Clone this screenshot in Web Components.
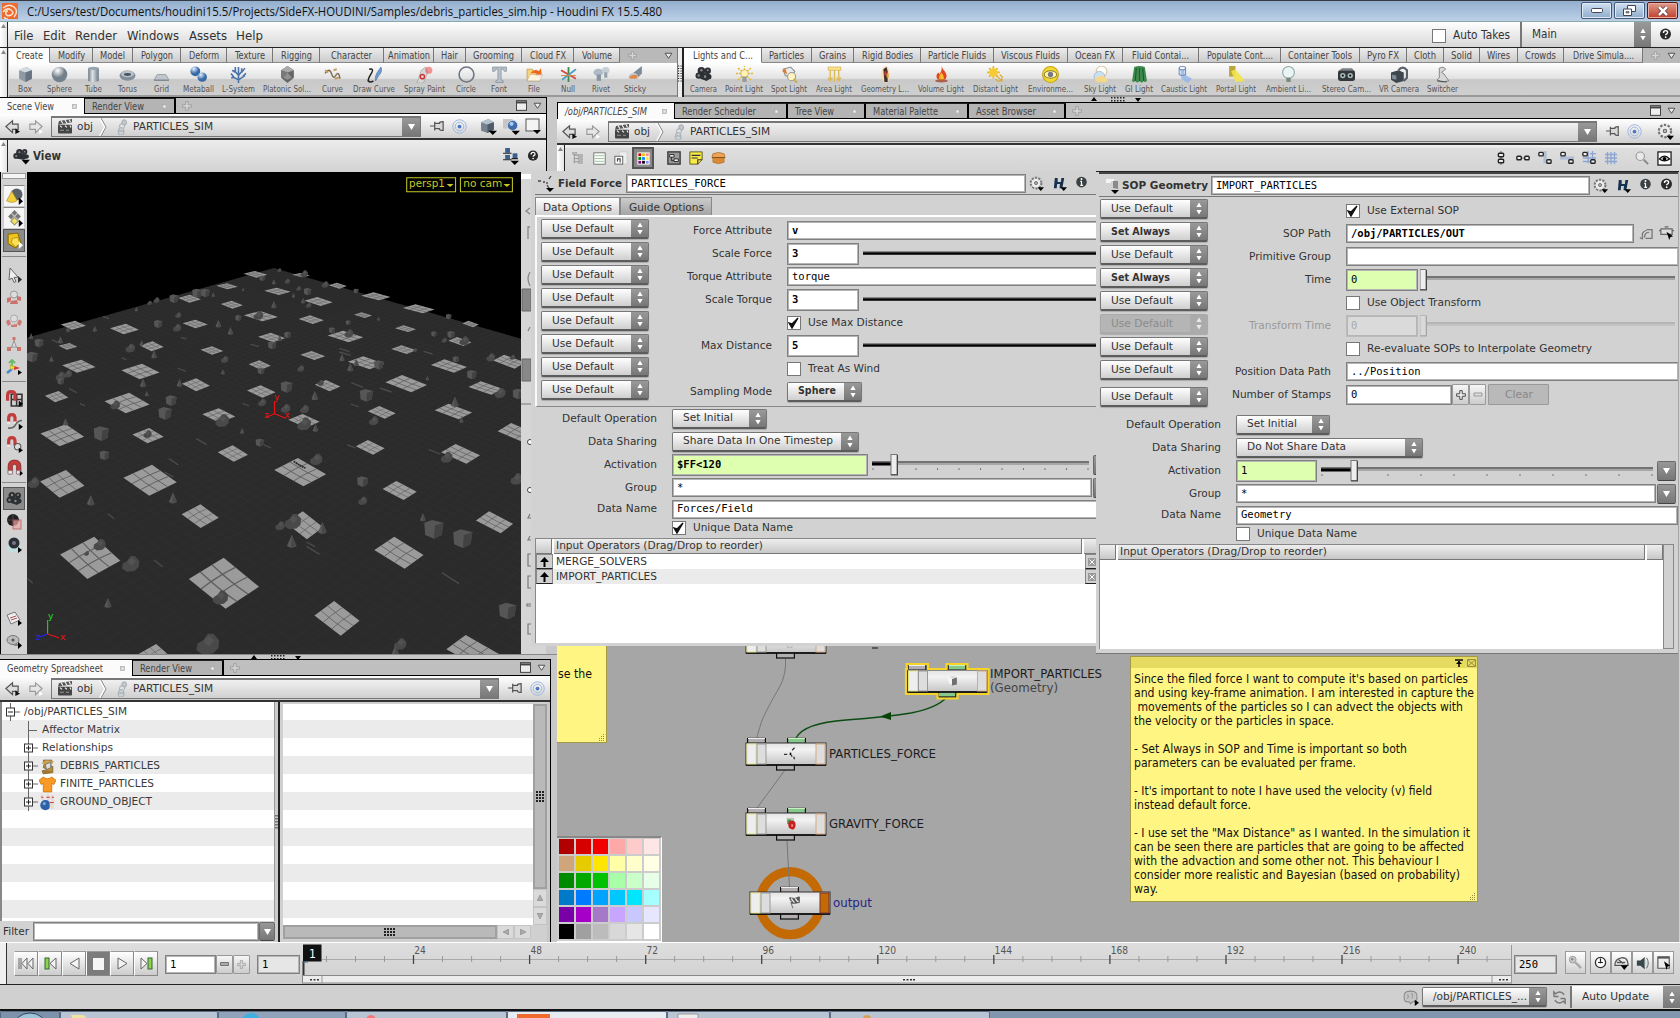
<!DOCTYPE html>
<html lang="en"><head><meta charset="utf-8"><title>Houdini FX</title>
<style>html,body{margin:0;padding:0;overflow:hidden;background:#000}</style></head>
<body><houdini-app></houdini-app>
<script>
const A=(e,n,d='')=>e.hasAttribute(n)?e.getAttribute(n):d;
const def=(name,css,html)=>customElements.define(name,class extends HTMLElement{
  connectedCallback(){ if(this.shadowRoot)return;
    this.attachShadow({mode:'open'}).innerHTML=`<style>*{box-sizing:border-box}${css}</style>`+html(this); }});

/* ---------- fitted text ---------- */
const ctx=document.createElement('canvas').getContext('2d');
const FAM={s:'"DejaVu Sans",sans-serif',c:'"DejaVu Sans Condensed","DejaVu Sans",sans-serif',m:'"DejaVu Sans Mono",monospace',o:'"Open Sans",sans-serif'};
customElements.define('t-x',class extends HTMLElement{
  connectedCallback(){ if(this.shadowRoot)return;
    const s=+A(this,'s','11'),f=FAM[A(this,'f','s')],b=this.hasAttribute('b')?'bold':'normal',i=this.hasAttribute('i')?'italic ':'';
    ctx.font=`${i}${b} ${s}px ${f}`;
    const n=ctx.measureText(this.textContent).width||1, w=this.hasAttribute('w')?+A(this,'w'):n*(A(this,'f')=='m'?.955:.965), k=w/n;
    this.attachShadow({mode:'open'}).innerHTML=`<style>:host{display:inline-block;flex:none;width:${w.toFixed(2)}px;height:${s+3}px;line-height:${s+3}px;font:${i}${b} ${s}px/${s+3}px ${f};white-space:pre}
    span{display:inline-block;transform:scaleX(${k.toFixed(4)});transform-origin:0 0;white-space:pre}</style><span><slot></slot></span>`; }});
const T=(t,w,x='')=>`<t-x ${w?`w="${w}"`:''} ${x}>${t}</t-x>`;

/* ---------- icons, 16x16 grid ---------- */
const IC={
box:'<path d="M2 4l7-3 5 3v8l-6 3-6-3z" fill="#8d99a5"/><path d="M2 4l7-3 5 3-6 2z" fill="#d3dae1"/><path d="M8 6l6-2v8l-6 3z" fill="#67737f"/>',
sphere:'<radialGradient id="a" cx=".38" cy=".25"><stop offset="0" stop-color="#fff"/><stop offset=".9" stop-color="#74808c"/></radialGradient><circle cx="8" cy="8" r="7.3" fill="url(#a)"/>',
tube:'<linearGradient id="a"><stop offset="0" stop-color="#6c7883"/><stop offset=".4" stop-color="#dde3e8"/><stop offset="1" stop-color="#6c7883"/></linearGradient><path d="M3 2h10v12q-5 2-10 0z" fill="url(#a)"/><ellipse cx="8" cy="2.2" rx="5" ry="1.5" fill="#98a5b0"/>',
torus:'<ellipse cx="8" cy="9" rx="7.5" ry="4.8" fill="#828e9a"/><ellipse cx="8" cy="7.5" rx="6" ry="3" fill="#bac3cb"/><ellipse cx="8" cy="8" rx="3.4" ry="1.3" fill="#4b5662"/>',
grid:'<path d="M4 8h8l3 5H1z" fill="#bfc5ca" stroke="#8c949c" stroke-width=".7"/><path d="M1 13h14v1H1z" fill="#7b848c"/>',
meta:'<radialGradient id="a" cx=".35" cy=".25"><stop offset="0" stop-color="#e4f1ff"/><stop offset="1" stop-color="#3669a6"/></radialGradient><circle cx="5" cy="5" r="4.6" fill="url(#a)"/><circle cx="11.5" cy="10.5" r="4.4" fill="url(#a)"/>',
lsys:'<path d="M8 16V7M8 13L2 10M8 13l6-4M8 9L4 4M8 9l4-5M8 7V1M4 11L1 7M12 10l3-3M5 6L2 4M11 6l3-4M5 5V1M11 5V2M1 11h3" fill="none" stroke="#4a74a9" stroke-width="1.5"/>',
plat:'<path d="M8 0l6 4v7l-6 5-6-5V4z" fill="#666"/><path d="M8 0l6 4-6 2-6-2z" fill="#aaa"/><path d="M8 6l-4 5 4 2 4-2z" fill="#919191"/><path d="M2 4l6 2-4 5-2 0z" fill="#797979"/>',
curve:'<path d="M1 7q4-6 6 0t4 2q3-5 4 3" fill="none" stroke="#7a6a52" stroke-width="1.3"/><path d="M1 4l3 2M9 4l3-1M10 12l4-1" stroke="#c79a5a" stroke-width="1.8"/>',
draw:'<path d="M3 3q5-1 2 4t-3 7q2 2 5 0" fill="none" stroke="#222" stroke-width="1.4"/><path d="M14 1q2 4-2 8l-3 5q-1-3 1-7z" fill="#6f9dce" stroke="#426d9d" stroke-width=".6"/>',
spray:'<path d="M5 4l4-3 2 5-4 10H1l3-9z" fill="#d8d8d8" stroke="#999" stroke-width=".6"/><circle cx="6" cy="10" r="2" fill="none" stroke="#c33" stroke-width="1.3"/><circle cx="12" cy="4" r="3.4" fill="#e55" opacity=".6"/>',
circle:'<circle cx="8" cy="8" r="7" fill="none" stroke="#6d7681" stroke-width="1.5"/>',
font:'<path d="M1.500 1h13v4h-2l-1-2h-2v10l2 1v1.500H4.500V14l2-1V3h-2l-1 2h-2z" fill="#b8c2cc" stroke="#77828e" stroke-width=".6"/>',
file:'<path d="M1 3h5l1 2h6v9H1z" fill="#f7d37c" stroke="#b98b2d" stroke-width=".6"/><path d="M4 7q4-5 8-2l2-3 1 8-7-1 2-2q-3-1-6 0z" fill="#ee6a1b"/><path d="M1 14l3-6h12l-3 6z" fill="#fff" opacity=".75" stroke="#aaa" stroke-width=".5"/>',
nul:'<path d="M8 1v14" stroke="#3a8a4a" stroke-width="1.7"/><path d="M1 4l14 8" stroke="#d4453e" stroke-width="1.7"/><path d="M15 3L2 13" stroke="#4aa1c4" stroke-width="1.7"/><path d="M1 9h14" stroke="#d08a4a" stroke-width="1"/>',
rivet:'<ellipse cx="5" cy="6" rx="4.500" ry="3.500" fill="#aebac5"/><path d="M3.500 8h4v6h-4z" fill="#8795a3"/><ellipse cx="12" cy="4" rx="3.500" ry="3" fill="#c6cfd7"/><path d="M10.500 6h3v5h-3z" fill="#93a0ac"/>',
sticky:'<path d="M14 0v7l-5 5-5-4z" fill="#7d8a97"/><circle cx="6" cy="11" r="4.500" fill="#c5cdd5"/><path d="M2 10q4-3 8-1l-1 3H3z" fill="#e08a4a"/>',
cam:'<g fill="#2c2f33"><circle cx="6" cy="4.500" r="3.500"/><circle cx="12" cy="4.500" r="3"/><path d="M5 6l8 1 2 4-4 3-6-2z"/><circle cx="3.500" cy="9" r="3"/><circle cx="13" cy="10" r="2.500"/></g><g fill="#888"><circle cx="6" cy="4" r="1.200"/><circle cx="12" cy="4" r="1"/><circle cx="3.500" cy="9" r="1.200"/><circle cx="9.500" cy="10" r="1.200"/></g>',
point:'<g stroke="#e3b92e" stroke-width="1.400" stroke-dasharray="2 1"><path d="M8 7V0M8 7L2 2M8 7l6-5M8 7H0M8 7h8M8 8l-6 5M8 8l6 5"/></g><circle cx="8" cy="7" r="3.500" fill="#fff3b5" stroke="#c9a43c" stroke-width=".6"/><rect x="6" y="10" width="4" height="5" fill="#999"/>',
spot:'<path d="M2 3l7-2 4 4-3 6-6-2z" fill="#e9eaec" stroke="#8a8f94"/><path d="M1 5l3-3 2 6z" fill="#dd7b33"/><circle cx="10" cy="10" r="3.800" fill="#fff4be" stroke="#999"/><path d="M12 12l3 4" stroke="#c8b05a" stroke-width="2"/>',
area:'<path d="M2 1h12v3H2z" fill="#fbe48c" stroke="#cda942" stroke-width=".6"/><path d="M4 4v9M8 4v11M12 4v9M2 11l2 3 2-3M10 11l2 3 2-3" fill="none" stroke="#ddbb52" stroke-width="1.300"/>',
geo:'<ellipse cx="8" cy="8" rx="4" ry="8" fill="#fbd9a4" opacity=".8"/><path d="M6 3l3-2 1 4v10H7z" fill="#3b3030"/><path d="M7 5h2v4H7z" fill="#d33"/><path d="M9 7h2v4H9z" fill="#e9a030"/>',
fire:'<path d="M8 0q1 3 3 5 3 4 1 7-4 3-8 0-2-3 1-6 1 1 1 2 3-4 2-8z" fill="#e2471e"/><path d="M8 6q3 4 2 7-2 2-4 0-1-3 2-7z" fill="#f9bb2f"/><ellipse cx="8" cy="14" rx="6" ry="1.500" fill="#9c3520" opacity=".7"/>',
dist:'<g stroke="#e7b821" stroke-width="1.500"><path d="M6 0v12M0 6h12M2 2l8 8M10 2l-8 8"/></g><circle cx="6" cy="6" r="4" fill="#f8cb35"/><path d="M9 9l5 5M12 8l3 3M8 12l3 3M14 11v3h-3" stroke="#d6ab2a" fill="none"/>',
env:'<circle cx="8" cy="8" r="7.500" fill="#f3d832" stroke="#c6a51b"/><ellipse cx="8" cy="8" rx="6" ry="3.500" fill="#fff6a9" stroke="#8f8132"/><circle cx="8" cy="8" r="2.500" fill="#778"/>',
sky:'<circle cx="9" cy="5" r="5" fill="#fff" stroke="#c0a469" stroke-width=".7"/><circle cx="7" cy="10" r="5" fill="#c9e0f3" stroke="#98a9b9" stroke-width=".6"/><path d="M3 12q5-5 10-1l2 3q-7 3-12 0z" fill="#f4d98a"/>',
gi:'<path d="M3 1q5-2 10 0l2 13q-2 2-3 0-2 3-4 0-2 3-4 0-2 2-3 0z" fill="#3f8a4e"/><path d="M5 2L4 14M8 2v12M11 2l1 12" stroke="#1d5a2e"/>',
caus:'<path d="M4 1h4v7l7 4-4 4-6-4z" fill="#8fb4ea" opacity=".8"/><ellipse cx="6" cy="2" rx="3" ry="1.500" fill="#fff" stroke="#6f8fc0"/><path d="M3 2v6q3 2 6 0V2" fill="none" stroke="#6f8fc0"/>',
portal:'<path d="M1 0h6v10H1z" fill="#baa63b"/><path d="M3 5l4-2 9 11-9 1z" fill="#f1e44b" opacity=".9"/>',
bulb:'<circle cx="8" cy="6" r="5.500" fill="#e8f5f4" stroke="#8fa7a7"/><path d="M6 11h4v4H6z" fill="#787"/>',
stereo:'<rect x="0" y="4" width="16" height="10" rx="2" fill="#33373b"/><path d="M1 4l3-2h9l2 2z" fill="#7d8388"/><circle cx="4.500" cy="9" r="2.500" fill="#abb"/><circle cx="11.500" cy="9" r="2.500" fill="#abb"/><circle cx="4.500" cy="9" r="1"/><circle cx="11.500" cy="9" r="1"/>',
vr:'<path d="M0 6l7-2 5 2v8l-7 2-5-3z" fill="#3e454d"/><path d="M7 4q4-5 8 0v7l-3 3" fill="none" stroke="#59626c" stroke-width="2"/><path d="M1 8l4 1v4l-4-1z" fill="#7e8b98"/>',
sw:'<path d="M5 2q4-2 6 1l-4 3q3 1 4 4l3 4-7 1-4-2q3-2 2-5z" fill="#d5d7d9" stroke="#777" stroke-width=".8"/><path d="M3 14l9 1" stroke="#555"/>',
back:'<path d="M1 8l7-6v3.500h6V11H8v3.500z" fill="#ddd" stroke="#555" stroke-width="1.300"/><path d="M11 10l5 3.500-5 2.500z" fill="#111"/>',
fwd:'<path d="M15 8L8 2v3.500H2V11h6v3.500z" fill="#e6e6e6" stroke="#999" stroke-width="1.200"/><path d="M12 11l4 2.500-4 2.500z" fill="#fff"/>',
clap:'<rect x="1" y="6" width="14" height="9.500" rx="1" fill="#444"/><path d="M1 6l1-4 13-2v3.500z" fill="#555"/><path d="M4 1.500L6 5M8 1l2 3.500M12 .500l1.500 3M3 7l2 2M8 7l2 2M13 7l1 2" stroke="#eee" stroke-width="1.200"/><path d="M3 12h4M9 12h3" stroke="#999"/>',
sim:'<circle cx="10.500" cy="3.500" r="2.800" fill="#c3c8cd" stroke="#9098a0" stroke-width=".7"/><path d="M6 5l4 0 1 3-3 2-3-2z" fill="#dfe3e6" stroke="#9098a0" stroke-width=".7"/><path d="M5 9q4-1 5 1 1 5-1 6H5q-3-3 0-7z" fill="#cdd2d7" stroke="#9098a0" stroke-width=".7"/><path d="M4 12h6" stroke="#9aa"/>',
pin:'<path d="M0 8h5M5 3v10M5 5h5q0-2 4-2v10q-4 0-4-2H5z" fill="#d8d8d8" stroke="#555" stroke-width="1.300"/>',
target:'<g fill="none" stroke="#9bb4dd"><circle cx="8" cy="8" r="7.200"/><circle cx="8" cy="8" r="4.600"/></g><circle cx="8" cy="8" r="2" fill="#4a79be"/>',
cubed:'<path d="M1 4l7-3 5 3v7l-6 3-6-2z" fill="#778290"/><path d="M1 4l7-3 5 3-6 2z" fill="#b5c2cf"/><path d="M7 6l6-2v7l-6 3z" fill="#4f5b69"/><path d="M8 12h8l-4 4z"/>',
sphd:'<rect x="0" y="1" width="9" height="9" fill="#c6c6c6"/><circle cx="9" cy="7" r="4.800" fill="#3c6cab" stroke="#ddd" stroke-width=".8"/><circle cx="8" cy="5.500" r="2" fill="#a9c9ee"/><path d="M8 12h8l-4 4z"/>',
sqd:'<rect x="1" y="1" width="13" height="12" fill="#f4f4f4" stroke="#555"/><path d="M8 12h8l-4 4z"/>',
camd:'<g fill="#2c2f33"><circle cx="6" cy="4" r="3"/><circle cx="11" cy="3.500" r="2.500"/><path d="M5 5l8 1 1 3-4 2-6-1z"/><circle cx="3" cy="7.500" r="2.700"/><circle cx="13" cy="8" r="2"/></g><g fill="#888"><circle cx="6" cy="4" r="1"/><circle cx="3" cy="7.500" r="1"/><circle cx="11" cy="3.500" r=".8"/></g><path d="M8 11h8l-4 4.500z"/>',
net:'<g fill="#3d5f8d"><rect x="3" y="0" width="4.500" height="4.500"/><rect x="3" y="6.500" width="4.500" height="4"/><rect x="10" y="5" width="4.500" height="4.500"/></g><path d="M1 5h8M1 11h8M9 10h6" stroke="#222"/><path d="M8 12h8l-4 4z"/>',
help:'<circle cx="8" cy="7.500" r="6.800" fill="#2a2a2a"/><path d="M5.500 6q0-2.700 2.600-2.700t2.500 2.200q0 1.200-1.500 1.900Q8.200 7.900 8.200 9" fill="none" stroke="#fff" stroke-width="1.700"/><circle cx="8.200" cy="11.300" r="1.100" fill="#fff"/>',
info:'<circle cx="8" cy="7.500" r="6.500" fill="#3b4044"/><path d="M8 6.500v5M6.500 6.500h2M6.500 11.500h3.500" stroke="#fff" stroke-width="1.500"/><circle cx="8" cy="3.800" r="1.200" fill="#fff"/>',
geard:'<circle cx="7.500" cy="7.500" r="5.500" fill="#e4e4e4" stroke="#777" stroke-width="2.600" stroke-dasharray="2.200 1.255"/><circle cx="7.500" cy="7.500" r="4.700" fill="#ececec"/><circle cx="7.500" cy="7.500" r="1.600" fill="#bbb" stroke="#666"/><path d="M9 12h7l-3.500 4z"/>',
hd:'<path d="M3 2h3v4.500h3.500L10 2h3l-2 11H8l.500-4.500H5.500L5 13H2z" fill="#16304f"/><path d="M9 12h7l-3.500 4z"/>',
max:'<rect x=".7" y="1" width="14.500" height="14" fill="#eee" stroke="#333" stroke-width="1.300"/><path d="M1 2h14v3H1z" fill="#444"/>',
tri:'<path d="M2 4h12l-6 9z" fill="#eee" stroke="#444" stroke-width="1.600"/>',
plus:'<path d="M6 1h4v5h5v4h-5v5H6v-5H1V6h5z" fill="#d4d4d4" stroke="#8c8c8c" stroke-width="1"/>',
plusd:'<path d="M6 1h4v5h5v4h-5v5H6v-5H1V6h5z" fill="#eee" stroke="#444" stroke-width="1.500"/>',
x:'<rect x="3" y="3" width="10" height="10" fill="#ccc" stroke="#999"/><rect x="6" y="6" width="4" height="4" fill="#eee"/>',
cone:'<circle cx="10" cy="6" r="5.500" fill="#5a6068"/><path d="M5.500 3l5 9q-5 3-10 0z" fill="#f2cf3c" stroke="#a98a20" stroke-width=".6"/><path d="M12 9l4 3.500-4 3.500z"/>',
dia:'<path d="M8 0l6 6-6 6-6-6z" fill="#777"/><path d="M5 3l6 6M11 3L5 9" stroke="#ccc"/><path d="M8 7l3.500 3.500L8 14l-3.500-3.500z" fill="#f5e16a" stroke="#997"/><path d="M12 9l4 3.500-4 3.500z"/>',
ycube:'<path d="M2 2l9-1 3 9-5 5-7-4z" fill="#f0c61c" stroke="#8d6d0a"/><path d="M6 6l5-1 2 6-4 3-4-4z" fill="#fbe056" stroke="#a8810d" stroke-width=".7"/><path d="M12 9l4 3.500-4 3.500z" fill="#fff"/>',
cur:'<path d="M4 1l8 9-4 .500 2 4-2 1-2-4.500L3 13z" fill="#eee" stroke="#666"/><path d="M12 9l4 3.500-4 3.500z" fill="#333"/>',
redm:'<circle cx="8" cy="4.500" r="3.500" fill="#ddd" stroke="#999"/><path d="M1 8l4-1v4l-4 2zM11 6l4 1v4l-4-1zM5 11l6-1 1 4H4z" fill="#c9605c" opacity=".85"/>',
rot:'<circle cx="8" cy="5.500" r="3.500" fill="#ddd" stroke="#aaa"/><path d="M0 9q2-4 4-1l1 3-3 2zM16 9q-2-4-4-1l-1 3 3 2zM5 12l6-1v3H5z" fill="#cc6c64" opacity=".85"/>',
scl:'<path d="M6.500 1h3v3h-3zM1 11h4v4H1zM11 11h4v4h-4z" fill="#c76"/><path d="M8 4v5M8 9l-4 3M8 9l4 3" stroke="#b66"/><path d="M8 5l2.500 6h-5z" fill="#ddd" stroke="#999"/>',
axis:'<path d="M6 10V1M3 4l3-3 3 3" stroke="#6b6" stroke-width="1.800" fill="none"/><path d="M6 10l-5 4" stroke="#48c" stroke-width="2.400"/><path d="M8 7l6 2-6 2z" fill="#d33"/><path d="M4 6l5 2-4 3z" fill="#f5e04a" stroke="#a90" stroke-width=".5"/><path d="M12 11l4 2.500-4 2.500z"/>',
mag:'<path d="M2 14V7q0-6 6-6t6 6v7h-4V7q0-2-2-2T6 7v7z" fill="#c33c3c" stroke="#7a1c1c" stroke-width=".7"/><path d="M2 11h4v3H2zM10 11h4v3h-4z" fill="#eee" stroke="#888" stroke-width=".6"/><path d="M13 11l3 2.500-3 2.500z"/>',
maggr:'<path d="M5 4h10v11H5zM10 4v11M5 9h10" fill="none" stroke="#333" stroke-width="1.500"/><path d="M0 10V5q0-5 5-5t5 5v5H7V5q0-2-2-2T3 5v5z" fill="#c33c3c"/><path d="M12 10l4 3-4 3z"/>',
magcv:'<path d="M1 9V5q0-5 4.500-5T10 5v4H7V5q0-2-1.500-2T4 5v4z" fill="#c33c3c"/><path d="M1 8h3v2H1zM7 8h3v2H7z" fill="#eee"/><path d="M2 14q5 1 7-3t6-4" fill="none" stroke="#666" stroke-width="1.500"/><path d="M12 10l4 3-4 3z"/>',
magpt:'<path d="M1 9V5q0-5 4.500-5T10 5v4H7V5q0-2-1.500-2T4 5v4z" fill="#c33c3c"/><path d="M1 8h3v2H1z" fill="#eee"/><circle cx="11" cy="10" r="3" fill="#ddd" stroke="#555"/><path d="M12 11l4 2.500-4 2.500z"/>',
obr:'<circle cx="7" cy="6" r="6" fill="#222"/><path d="M7 0v12M1 6h12" stroke="#555" stroke-width=".7"/><rect x="7" y="6" width="8" height="9" fill="#eaa" opacity=".7" stroke="#b44"/>',
lens:'<ellipse cx="8" cy="11" rx="7.500" ry="4.500" fill="#c2dede"/><circle cx="8" cy="6" r="5.500" fill="#2a3036"/><circle cx="8" cy="6" r="2" fill="#778"/><path d="M12 10l4 3-4 3z"/>',
snap:'<path d="M1 5l8-3 5 8-9 4z" fill="#eee" stroke="#777"/><path d="M4 8l6-2M5 10l6-2" stroke="#a55"/><path d="M12 10l4 3-4 3z"/>',
lens2:'<ellipse cx="7" cy="7" rx="6" ry="4.500" fill="#bbb" stroke="#777"/><circle cx="7" cy="7" r="1.500" fill="#555"/><path d="M8 12h6" stroke="#888" stroke-width="2"/><path d="M12 9l4 3.500-4 3.500z"/>',
treei:'<path d="M4 1v13M4 4h6M4 8h6M4 12h6" stroke="#888" fill="none"/><path d="M2 0h5v3H2zM9 3h5v3H9zM9 7h5v3H9zM9 11h5v3H9z" fill="#bbb" stroke="#888" stroke-width=".5"/>',
list:'<rect x="1" y="1" width="14" height="14" fill="#f7fff7" stroke="#666"/><path d="M2 4.500h12M2 8h12M2 11.500h12" stroke="#9cb59c"/>',
pane:'<rect x="6" y="1" width="9" height="14" fill="#eee" stroke="#ccc"/><rect x="1" y="6" width="9" height="9" fill="#fff" stroke="#555"/><path d="M4 12V9l3 0v4" stroke="#444" fill="none" stroke-width="1.300"/>',
palic:'<rect x="1" y="1" width="14" height="14" fill="#fff" stroke="#888"/><g stroke-width="3"><path d="M2.500 4h3" stroke="#c00"/><path d="M6.500 4h3" stroke="#e6c000"/><path d="M10.500 4h3" stroke="#f88"/><path d="M2.500 8h3" stroke="#080"/><path d="M6.500 8h3" stroke="#08f"/><path d="M10.500 8h3" stroke="#fd5"/><path d="M2.500 12h3" stroke="#808"/><path d="M6.500 12h3" stroke="#000"/><path d="M10.500 12h3" stroke="#88f"/></g>',
boxn:'<rect x="1" y="1" width="14" height="14" fill="#999" stroke="#333" stroke-width="1.500"/><path d="M3 4h5v3H3zM8 9h5v3H8z" fill="#eee" stroke="#222"/><path d="M5 7v4h3" stroke="#222" fill="none"/>',
note:'<path d="M1 1h14v9l-5 5H1z" fill="#f7ea4a" stroke="#55500e"/><path d="M3 5h10M3 8h7M15 10h-5v5" stroke="#333" fill="none" stroke-width="1.300"/>',
subnet:'<path d="M2 3q6-3 12 0l1 4H1z" fill="#eaa45a" stroke="#a8641c" stroke-width=".7"/><path d="M2 7h12v5q-6 3-12 0z" fill="#d98a35" stroke="#a8641c" stroke-width=".6"/><path d="M1 7h14" stroke="#8c4f12"/>',
v1:'<path d="M8 0v16" stroke="#555"/><g fill="#eee" stroke="#222" stroke-width="1.600"><rect x="5" y="2.500" width="6" height="4" rx="1"/><rect x="5" y="9.500" width="6" height="4" rx="1"/></g>',
v2:'<path d="M0 8h16" stroke="#555"/><g fill="#eee" stroke="#222" stroke-width="1.600"><rect x="1" y="6" width="5" height="4" rx="1"/><rect x="10" y="6" width="5" height="4" rx="1"/></g>',
v3:'<path d="M7 0v14M9 0v14" stroke="#8da5d2"/><g fill="#eee" stroke="#222" stroke-width="1.500"><rect x="1" y="1.500" width="5" height="4" rx="1"/><rect x="10" y="10" width="5" height="4" rx="1"/></g>',
v4:'<path d="M0 7h16M0 9h16" stroke="#8da5d2"/><g fill="#eee" stroke="#222" stroke-width="1.500"><rect x="1" y="1.500" width="5" height="4" rx="1"/><rect x="10" y="10" width="5" height="4" rx="1"/></g>',
v5:'<path d="M7 0v14M12 0v14M1 8h15M1 12h15M9 3h7" stroke="#8da5d2" stroke-width="1.500"/><g fill="#eee" stroke="#222" stroke-width="1.500"><rect x="1" y="1.500" width="5" height="4" rx="1"/><rect x="10" y="10" width="5" height="4" rx="1"/></g>',
v6:'<path d="M4 1v14M8 1v14M12 1v14M1 4h14M1 8h14M1 12h14" stroke="#8da5d2" stroke-width="1.500"/>',
zoom:'<circle cx="6" cy="6" r="4.800" fill="#e9e9e9" stroke="#999" stroke-width="1.300"/><path d="M10 10l5 5" stroke="#888" stroke-width="2.200"/>',
eye:'<rect x="1" y="1" width="14" height="14" fill="#fff" stroke="#222" stroke-width="1.400"/><path d="M2.500 8.500q5.500-6 11 0-5.500 4-11 0z" fill="#ddd" stroke="#111" stroke-width="1.300"/><circle cx="8" cy="8.300" r="2" />',
field:'<path d="M0 5h3M5 6h2M11 3l2-3M9 6v2M9 9l2 3" stroke="#444" stroke-width="1.300"/><path d="M8 12h8l-4 4z"/>',
ffield:'<path d="M0 9h4M10 4l3-3M12 12l1 3M9 10l1 2" stroke="#333" stroke-width="1.600"/><path d="M7 7h2v3H7z"/>',
geom:'<path d="M1 1h8v2H6v2H1z" fill="#f4f4f4"/><path d="M8 3h5v8l-5-1z" fill="#8a8a8a"/><path d="M6 12h8l-4 4z"/>',
geon:'<path d="M2 4l7-1v9H5z" fill="#f6f6f6"/><path d="M8 6l6-2v9l-6 1z" fill="#6f6f6f"/><path d="M5 3l6-1 3 2-6 2z" fill="#dcdcdc"/>',
jump:'<path d="M5 13q-2-8 4-9M2 12l3 2M9 3h6v10H8M12 6q-5 0-5 6" fill="none" stroke="#777" stroke-width="1.400"/>',
pick:'<path d="M2 3h12v6H2zM0 5h2M14 5h2M6 1h4" fill="#ddd" stroke="#666" stroke-width="1.300"/><path d="M8 6l7 5-3 1-1 3z"/>',
ch:'<path d="M4 2h8v3l-3 1 4 2v5l-9 2-1-3 5-1-4-2 1-4z" fill="#b98f3c" stroke="#6e5320" stroke-width=".7"/><path d="M2 5l5-3 7 1-2 3-5 0z" fill="#c9a050"/><path d="M6 6l5-2v5l-4 2z" fill="#ddd" stroke="#666" stroke-width=".7"/><path d="M3 12l7 0 4 2-8 1z" fill="#9c7730"/>',
shirt:'<path d="M4 1q4 3 8 0l4 3-2 4-2-1v8H4V7L2 8 0 4z" fill="#f89a24" stroke="#c96f0c" stroke-width=".7"/>',
bowl:'<path d="M2 1q3 2 1 5M8 0q2 3 0 7M13 1q-2 3 1 6" stroke="#ead9d9" stroke-width="2.600" fill="none"/><path d="M2 3h2M7 3h3M12 3h2" stroke="#c33"/><circle cx="6" cy="10.500" r="4.800" fill="#2e62a8"/><circle cx="5" cy="9" r="1.500" fill="#7fa8dc"/><path d="M10 7l4 0 0 7-4 0z" fill="#e6dcd0"/><path d="M10 8h4" stroke="#c44"/>',
key:'<circle cx="5" cy="5" r="3.600" fill="#ccc" stroke="#999"/><circle cx="4.500" cy="4.500" r="1.300" fill="#888"/><path d="M7 7l7 7M11 13l2-2" stroke="#aaa" stroke-width="2.500"/>',
clock:'<circle cx="8" cy="8" r="6.300" fill="#fff" stroke="#333" stroke-width="1.600"/><path d="M8 3v6M5 8h6" stroke="#222" stroke-width="1.500"/>',
proto:'<path d="M1 11q0-7 7-8t7 8zM3 8h9M5 5l5 4" fill="#eee" stroke="#555" stroke-width="1.400"/><path d="M7 11h8l-4 5z"/>',
snd:'<path d="M1 5h4l5-4v14l-5-4H1z" fill="#38474c"/><path d="M10 3q5 5 0 10z" fill="#cdd"/><path d="M12 2q4 6 0 12" stroke="#555" fill="none"/>',
win:'<path d="M1 1h13v13H1z" fill="#eee" stroke="#555" stroke-width="1.300"/><path d="M1 2h13" stroke="#555" stroke-width="2"/><path d="M8 6l7 5-3 1-1 4z"/>',
brain:'<path d="M2 8q-1-6 6-6t6 6q1 4-4 4l-2 2-1-2q-5 1-5-4z" fill="#c4c4c4" stroke="#888"/><path d="M5 5q2 2 0 4M9 4q2 2 0 5" stroke="#999" fill="none"/><path d="M12 10l4 3-4 3z"/>',
refr:'<path d="M2 7V2l2 2q5-4 9 1M14 9v5l-2-2q-5 4-9-1M2 7h5M14 9H9" fill="none" stroke="#777" stroke-width="1.500"/>',
logo:'<rect width="16" height="16" fill="#ee6b2d"/><path d="M1 5q6-5 11-1t0 10M1 9q4-5 8-2t0 5-5-1 2-3M2 14q1 2 4 2" fill="none" stroke="#fbe3d3" stroke-width="1.500"/>',
apple:'<path d="M3 1h9l1 3-4 4-5-1z" fill="#b9c9b5"/><path d="M4 3h5l-1 5-4 1z" fill="#4e9a52"/><path d="M7 5q5-2 7 2 1 5-2 8-4 1-6-2-2-5 1-8z" fill="#c81f1f"/><path d="M9 9h2v3H9z" fill="#ee9a9a"/>',
flag:'<path d="M2 2l6 1 6-2v7l-5 1-5 0zM4 9l2 6" fill="#555" stroke="#555"/><path d="M4 3l2 3M9 3l2 3M6 6l2 2M11 6l2 1M3 6l1 1" stroke="#eee" stroke-width="1.600"/>',
};
def('ic-on',':host{display:block;flex:none}svg{display:block}',e=>{const w=A(e,'w','16'),h=A(e,'h',w);
  return `<svg width="${w}" height="${h}" viewBox="0 0 16 16" preserveAspectRatio="none">${IC[A(e,'n')]||''}</svg>`});
const I=(n,w=15,h=w,st='')=>`<ic-on n="${n}" w="${w}" h="${h}" style="${st}"></ic-on>`;

/* ---------- controls ---------- */
const UD='<svg width="8" height="13" viewBox="0 0 8 13"><path d="M4 .5L6.600 5H1.400zM4 12.500L1.400 8h5.200z" fill="#fff"/></svg>';
def('h-select',`:host{display:flex;flex:none;height:20px;color:#333;border:1px solid #777;border-bottom:2px solid #5c5c5c;border-radius:2px;background:linear-gradient(#fff,#cfcfcf);align-items:stretch;box-shadow:0 1px 1px #aaa}
:host([dis]){color:#8b8b8b;background:#b5b5b5;border-color:#aaa}:host([flat]){border:0;border-left:2px solid #777;box-shadow:none;border-radius:0}
.t{flex:1;display:flex;align-items:center;padding-left:10px;min-width:0}.a{width:17px;background:linear-gradient(#999,#777);display:grid;place-items:center}:host([dis]) .a{background:#a8a8a8;opacity:.7}`,
e=>`<div class="t">${T(A(e,'t'),A(e,'tw')||0,(e.hasAttribute('b')?'b ':'')+`s="${A(e,'s','11')}"`)}</div><div class="a">${UD}</div>`);
const SEL=(t,w,tw,x='',h=20)=>`<h-select t="${t}" tw="${tw}" ${x} style="width:${w}px;height:${h}px"></h-select>`;
def('h-field',`:host{display:flex;flex:none;align-items:center;height:19px;background:#fff;border:1px solid #808080;outline:1px solid #b5b5b5;outline-offset:-2px;color:#000;padding-left:4px;overflow:hidden}
:host([g]){background:#deffb0}:host([dis]){background:#dadada;color:#aaa;border-color:#bbb}`,e=>A(e,'v')?T(A(e,'v'),0,'f="m" '+(e.hasAttribute('b')?'b':'')):'');
const FLD=(v,w,h=19,x='')=>`<h-field v="${v}" ${x} style="width:${w}px;height:${h}px"></h-field>`;
def('h-check',`:host{display:flex;flex:none;align-items:center;gap:7px;color:#333}i{width:14px;height:14px;background:#fff;border:1.500px solid #777;display:block}svg{display:block}`,
e=>`<i>${e.hasAttribute('on')?'<svg width="12" height="12" viewBox="0 0 12 12"><path d="M1 6l3 5 6-10-6 6z" fill="#111" stroke="#111" stroke-width="1.400"/></svg>':''}</i>${T(A(e,'t'),A(e,'tw'),`s="${A(e,'s','11')}"`)}`);
const CHK=(t,tw,on='',x='')=>`<h-check t="${t}" tw="${tw}" ${on} ${x}></h-check>`;
def('h-slider',`:host{display:block;flex:none}svg{display:block}`,e=>{const w=+A(e,'w'),p=+A(e,'p'),tk=+A(e,'k',0),d=e.hasAttribute('dis');let s='';
 if(e.hasAttribute('full'))return `<svg width="${w}" height="22"><path d="M0 8.500h${w}" stroke="#888"/><path d="M0 10.500h${w}" stroke="#000" stroke-width="2.400"/></svg>`;
 for(let i=0;i<=tk&&tk;i++)s+=`<path d="M${1+i*(w-2)/tk} 14v2" stroke="#777"/>`;
 return `<svg width="${w}" height="22" ${d?'opacity=".3"':''}><path d="M0 8h${w}" stroke="#555" stroke-width="1.400"/><path d="M0 10h${w}" stroke="#999" stroke-width="1.600"/><path d="M0 10h${p}" stroke="#000" stroke-width="3"/>${s}<rect x="${p}" y=".5" width="6" height="20" fill="#eee" stroke="#777"/><path d="M${p+6.500} 1v20M${p} 21h7" stroke="#444"/></svg>`});
def('h-drop',`:host{display:grid;place-items:center;flex:none;width:19px;height:20px;background:linear-gradient(#979797,#777);border:1px solid #6a6a6a;border-bottom-color:#444;border-radius:2px}`,
 ()=>'<svg width="7" height="6"><path d="M0 0h7L3.500 6z" fill="#fff"/></svg>');
def('p-row',`:host{display:flex;height:23px;align-items:center;color:#333;flex:none}.s{align-self:flex-start;flex:none}.l{display:flex;justify-content:flex-end;flex:none;margin-right:15px}.c{display:flex;align-items:center;min-width:0}`,
e=>`<div class="s"><slot name="s"></slot></div><div class="l" style="width:${A(e,'lw')}px;${e.hasAttribute('dis')?'color:#999':''}">${A(e,'l')?T(A(e,'l'),A(e,'tw')||0):''}</div><div class="c"><slot></slot></div>`);
def('h-btn',`:host{display:grid;place-items:center;flex:none;height:21px;background:linear-gradient(#f6f6f6,#ccc);border:1px solid #999;border-radius:1px}`,()=>'<slot></slot>');

/* ---------- shelf ---------- */
const SH={
l:{x0:9,tabs:[['Create',50,27],['Modify',93,27],['Model',133,25],['Polygon',181,32],['Deform',227,30],['Texture',273,30],['Rigging',320,31],['Character',384,41],['Animation',434,42],['Hair',466,17],['Grooming',522,41],['Cloud FX',574,36],['Volume',620,30]],
items:[['Box',25,14,'box'],['Sphere',59,25,'sphere'],['Tube',93,17,'tube'],['Torus',127,19,'torus'],['Grid',161,15,'grid'],['Metaball',198,31,'meta'],['L-System',238,33,'lsys'],['Platonic Sol...',287,48,'plat'],['Curve',332,21,'curve'],['Draw Curve',374,42,'draw'],['Spray Paint',424,41,'spray'],['Circle',466,20,'circle'],['Font',499,16,'font'],['File',534,12,'file'],['Null',568,14,'nul'],['Rivet',601,18,'rivet'],['Sticky',635,22,'sticky']]},
r:{x0:684,tabs:[['Lights and C...',762,60],['Particles',812,35],['Grains',854,27],['Rigid Bodies',921,51],['Particle Fluids',994,58],['Viscous Fluids',1068,59],['Ocean FX',1123,40],['Fluid Contai...',1199,57],['Populate Cont....',1281,66],['Container Tools',1360,64],['Pyro FX',1407,32],['Cloth',1444,22],['Solid',1480,21],['Wires',1518,23],['Crowds',1564,31],['Drive Simula....',1643,61]],
items:[['Camera',703,27,'cam'],['Point Light',744,38,'point'],['Spot Light',789,36,'spot'],['Area Light',834,36,'area'],['Geometry L...',885,48,'geo'],['Volume Light',941,46,'fire'],['Distant Light',995.500,45,'dist'],['Environme...',1050.500,45,'env'],['Sky Light',1100,32,'sky'],['GI Light',1139,28,'gi'],['Caustic Light',1184,46,'caus'],['Portal Light',1236,40,'portal'],['Ambient Li...',1288,45,'bulb'],['Stereo Cam...',1346,49,'stereo'],['VR Camera',1399,40,'vr'],['Switcher',1442,31,'sw']]}};
def('shelf-set',`:host{display:block;flex:none;height:49px}
.tabs{display:flex;height:15px;background:#b9b9b9}.tab{display:flex;align-items:center;justify-content:center;flex:none;height:15px;border-right:1px solid #777;border-bottom:1px solid #888;background:linear-gradient(#ececec,#cbcbcb);color:#444}.tab:first-child{background:#fff;border-bottom-color:#fff}
.p{margin-left:8px;align-self:center}.d{margin-left:auto;margin-right:4px;align-self:center}
.b{display:flex;height:34px;background:linear-gradient(#fff,#e2e2e2 48%,#c8c8c8 52%,#cfcfcf);border-bottom:2px solid #999;padding-top:3px}
.i{display:flex;flex-direction:column;align-items:center;flex:none;color:#555;gap:1px}`,
e=>{const d=SH[A(e,'d')];let x=d.x0,h='',r=d.x0;
 d.tabs.forEach(([n,to,tw])=>{h+=`<div class="tab" style="width:${to-x}px">${T(n,tw,'f="c" s="10"')}</div>`;x=to});
 let b='';d.items.forEach(([n,c,w,ic])=>{b+=`<div class="i" style="width:${w}px;margin-left:${c-w/2-r}px">${I(ic,17,17)}${T(n,w,'s="8"')}</div>`;r=c+w/2});
 return `<div class="tabs">${h}<div class="p">${I('plus',9)}</div><div class="d">${I('tri',9)}</div></div><div class="b">${b}</div>`});

/* ---------- pane chrome ---------- */
def('pane-tabs',`:host{display:flex;height:16px;flex:none;background:#bfbfbf;border-bottom:1px solid #000;color:#444}
.t{display:flex;flex:none;align-items:center;background:#b4b4b4;border-right:2px solid #000;border-top:1px solid #222;padding:0 6px 0 7px;height:15px}.t:first-of-type{background:#fbfbfb;height:16px;border-top:0;border-right:1px solid #000}.x{margin-left:auto}.p{align-self:center;margin-left:6px}.e{margin-left:auto;display:flex;align-items:center;gap:6px;padding-right:4px}`,
e=>JSON.parse(A(e,'d')).map(([n,w,tw],i)=>`<div class="t" style="width:${w}px">${T(n,tw,`f="c" s="10" ${e.hasAttribute('it')&&!i?'i':''}`)}<div class="x">${I('x',7)}</div></div>`).join('')+`<div class="p">${I('plus',10)}</div><div class="e">${I('max',11)}${I('tri',9)}</div>`);
def('path-bar',`:host{display:flex;height:26px;flex:none;align-items:center;background:linear-gradient(#fff,#cfcfcf);border-bottom:2px solid #333;color:#333;padding-left:5px}
.b{display:flex;align-items:center;height:21px;border:1px solid #777;border-top-width:2px;background:linear-gradient(#f0f0f0,#d0d0d0);margin-left:8px;flex:none}.b span{flex:none}.d{margin-left:auto;width:18px;height:100%;background:linear-gradient(#999,#777);display:grid;place-items:center}svg{display:block;flex:none}.r{display:flex;align-items:center}`,
e=>`${I('back',15,15)}${I('fwd',15,15,'margin-left:8px')}<div class="b" style="width:${A(e,'w')}px"><span style="width:5px"></span>${I('clap',16,15)}<span style="width:4px"></span>${T('obj',16)}<svg width="10" height="18" style="margin:0 6px 0 6px"><path d="M1 0l5 9-5 9" fill="none" stroke="#fff" stroke-width="2"/><path d="M2 0l5 9-5 9" fill="none" stroke="#888"/></svg>${I('sim',14,16)}<span style="width:4px"></span>${T('PARTICLES_SIM',80)}<div class="d"><svg width="7" height="6"><path d="M0 0h7L3.500 6z" fill="#fff"/></svg></div></div><div class="r"><slot></slot></div>`);
def('h-split',`:host{display:flex;align-items:center;justify-content:center;flex:none;background:#c8c8c8;gap:6px}svg{display:block}`,()=>`<svg width="56" height="5"><path d="M0 4h6L3 0zM44 1h6l-3 4z"/><g fill="#222">${[...Array(5)].map((_,i)=>`<path d="M${20+i*3} 0h1.500v1.500h-1.500zM${20+i*3} 3h1.500v1.500h-1.500z"/>`).join('')}</g></svg>`);

/* ---------- 3D viewport ---------- */
const TILES=[[707,317,776,337],[848,323,900,336],[628,354,690,372],[955,352,1007,370],[767,367,844,389],[1049,381,1134,405],[517,388,583,412],[641,406,705,430],[884,395,966,422],[1170,417,1262,444],[708,437,807,468],[1028,441,1080,458],[867,450,940,476],[1343,466,1390,486],[176,466,249,493],[319,475,403,507],[530,463,603,489],[1147,480,1208,500],[749,502,828,531],[951,496,1055,531],[1302,515,1369,542],[170,533,224,553],[406,528,475,558],[582,543,648,568],[1136,540,1209,566],[872,557,944,584],[180,583,277,622],[1010,573,1116,612],[1251,582,1356,622],[352,595,463,642],[722,585,786,613],[1432,568,1525,610],[528,639,609,678],[1119,629,1240,681],[914,644,988,678],[1360,648,1461,688],[130,677,198,711],[717,660,800,697],[303,682,434,744],[1262,715,1371,762],[1068,722,1149,760],[587,729,683,772],[837,746,928,787],[117,777,244,843],[384,788,475,834],[1445,773,1560,832],[1033,824,1117,868],[1281,836,1394,895],[632,840,720,889],[796,878,947,963],[116,914,245,997],[358,898,513,991],[1111,947,1210,1004],[527,1017,635,1088],[830,1038,938,1122],[1382,1038,1490,1104],[1087,1114,1230,1210],[174,1114,349,1241],[548,1177,752,1330],[913,1307,1044,1411],[1296,1409,1450,1510],[400,1436,500,1510]];
const DEB=[[811,315,6,0],[883,326,11,0],[795,350,8,2],[834,348,8,0],[761,339,8,1],[944,358,10,0],[1034,377,7,1],[867,370,7,0],[893,379,11,1],[852,390,7,2],[880,406,9,2],[896,420,8,0],[795,418,11,2],[572,384,14,1],[596,383,13,1],[619,388,7,2],[505,400,13,1],[454,405,9,0],[434,413,7,0],[396,431,7,2],[706,372,5,2],[517,450,9,0],[692,458,9,1],[750,451,14,0],[1303,454,8,1],[1099,460,6,2],[459,476,12,1],[514,488,12,0],[634,475,12,2],[669,497,12,2],[275,491,9,2],[198,495,6,1],[90,513,9,2],[113,533,13,1],[175,524,11,2],[93,575,16,1],[149,581,9,2],[378,549,14,0],[447,567,12,2],[411,533,9,2],[835,509,10,1],[812,519,9,2],[790,540,12,1],[964,495,9,1],[1011,472,7,1],[1013,505,13,0],[1260,506,8,1],[1310,508,11,1],[1348,527,14,0],[1290,525,8,0],[1205,555,6,0],[1324,582,9,1],[1425,577,13,0],[1488,576,8,0],[1370,628,14,1],[1241,638,7,2],[993,577,11,2],[1017,606,13,2],[1034,591,11,2],[1100,599,14,1],[652,583,11,0],[647,620,8,2],[758,617,10,1],[873,610,10,0],[175,633,14,0],[197,626,12,0],[176,648,10,1],[415,653,13,2],[426,685,8,2],[521,653,12,2],[334,720,14,0],[497,706,16,1],[479,744,19,1],[832,665,17,1],[931,653,9,0],[914,691,14,2],[761,712,12,0],[829,730,14,0],[884,732,13,0],[1064,690,19,1],[1321,710,16,2],[1452,684,16,0],[1505,686,16,1],[1340,764,9,2],[1085,767,14,0],[190,770,11,2],[294,805,22,1],[303,870,14,1],[428,807,12,0],[645,767,20,0],[703,797,9,2],[754,832,12,1],[883,777,20,0],[916,788,12,2],[918,883,18,0],[1297,877,17,0],[97,953,17,0],[263,1005,16,2],[502,998,17,2],[1053,949,16,1],[1053,1007,13,0],[1228,1056,12,2],[1500,942,18,0],[1260,1092,28,1],[1344,1120,28,1],[850,1070,24,0],[813,1082,14,0],[936,1088,18,2],[847,1128,20,2],[289,1139,18,0],[379,1197,25,0],[251,1165,7,0],[640,1298,22,0],[313,1313,15,2],[603,1438,33,0],[1162,1437,18,0],[1148,1460,20,2],[1474,1337,25,1]];
def('scene-view',':host{display:block;flex:none;width:494px;height:482px;background:#000}svg{display:block}',()=>{
 let g='';for(let i=-26;i<52;i++){const x=i*75;g+=`<path d="M3418 -457L${x-1000} 1900M-1828 -457L${x+1600} 1900"/>`}
 let t='';TILES.forEach(([x0,y0,x1,y1])=>{const cx=(x0+x1)/2,w=x1-x0,h=y1-y0,f=.60-.26*(cx-78)/1435,b=1-f+.02;
  const P=[[x0,y0+h*.42],[x0+w*f,y0],[x1,y0+h*.57],[x0+w*b,y1]];
  const L=(a,c,k)=>[a[0]+(c[0]-a[0])*k,a[1]+(c[1]-a[1])*k];const sw=Math.max(1.5,w/55);
  t+=`<path d="M${P.join('L')}Z" fill="#9b9b9b"/><path fill="none" stroke="#5e5e5e" stroke-width="${sw}" d="${[1/3,2/3].map(k=>{const a=L(P[0],P[1],k),c=L(P[3],P[2],k),d=L(P[1],P[2],k),e=L(P[0],P[3],k),m=[(a[0]+c[0])/2,(a[1]+c[1])/2+h*.05],n=[(d[0]+e[0])/2,(d[1]+e[1])/2-h*.05];return `M${a}Q${m} ${c}M${d}Q${n} ${e}`}).join('')}"/>`});
 let d='';DEB.forEach(([x,y,r,k])=>{ if(k==2)d+=`<path d="M${x} ${y-r}l${r*.7} ${r*1.7}q${-r*.7} ${r*.5} ${-r*1.400} 0z" fill="#585858"/><path d="M${x} ${y-r}l${-r*.1} ${r*1.900}l${r*.8} ${-r*.2}z" fill="#494949"/>`;
  else if(k==1)d+=`<path d="M${x-r} ${y-r*.7}l${r*.8} ${-r*.3} ${r*1.200} ${r*.3} ${-r*.2} ${r*1.300} ${-r*.8} ${r*.4} ${-r*.9} ${-r*.4}z" fill="#565656"/><path d="M${x+r*.1} ${y-r*.4}l${r*.9} ${-r*.3} ${-r*.2} ${r*1.300} ${-r*.8} ${r*.4}z" fill="#424242"/>`;
  else d+=`<path d="M${x-r} ${y+r*.5}l${r*.1} ${-r*.6} ${r*.5} ${-r*.3} ${r*.4} ${-r*.6} ${r*.5} ${0} ${r*.5} ${r*.6} ${-r*.05} ${r*.7} ${-r*.5} ${r*.5} ${-r*.9} ${r*.1}z" fill="#494949"/><path d="M${x-r*.4} ${y-r*.3}l${r*.5} ${-r*.5} ${r*.5} ${r*.4} ${-r*.5} ${r*.6}z" fill="#535353"/>`});
 const sl=[[570,820,30,18],[490,880,28,19],[313,1045,18,15],[448,1185,24,20],[890,1143,38,24],[890,1130,25,14],[1283,1222,50,33],[1245,853,34,13],[1008,838,24,10],[80,1240,15,14],[765,838,22,10],[1020,652,34,14],[1103,668,34,12],[200,670,22,12],[232,714,14,8],[985,560,34,10],[985,549,30,10],[515,608,24,10],[728,537,24,6],[705,714,18,8],[1018,716,24,9],[1230,558,26,8],[298,453,18,7],[150,523,18,9],[353,577,14,7],[478,920,25,15],[525,516,16,5]].map(([x,y,w,h])=>`<path d="M${x} ${y}l${w} ${h}"/>`).join('');
 return `<svg width="494" height="482" viewBox="78 20 1435 1446" preserveAspectRatio="none" overflow="hidden"><defs><clipPath id="f"><path d="M78 517L795 308 1513 520V1470H78Z"/></clipPath></defs>
 <path d="M78 517L795 308 1513 520V1470H78Z" fill="#2b2b2b"/><g clip-path="url(#f)" stroke="#333" stroke-width="1.500">${g}</g><g stroke="#4b4b4b" stroke-width="4">${sl}</g>${t}${d}<path d="M853 888q18 14 34 20" stroke="#222" stroke-width="5" stroke-dasharray="5 2"/>
 <path d="M797 708v37l-22 10M797 745l32 14" stroke="#e11" stroke-width="3.500" fill="none"/><g fill="#e11" font-family="DejaVu Sans" font-size="25"><text x="796" y="704">y</text><text x="767" y="759">z</text><text x="826" y="759">x</text></g>
 <path d="M138 1364v42" stroke="#2d2" stroke-width="3"/><path d="M138 1406l34 12" stroke="#e11" stroke-width="3"/><path d="M138 1406l-22 8" stroke="#22f" stroke-width="3"/><g font-family="DejaVu Sans" font-size="27"><text x="139" y="1360" fill="#2d2">y</text><text x="104" y="1424" fill="#22f">z</text><text x="174" y="1424" fill="#e11">x</text></g>
 <g fill="none" stroke="#c8c828" stroke-width="3"><path d="M1181 37h142v42h-142zM1337 37h151v42h-151z"/></g><g fill="#c8c828"><path d="M1297 56h20l-10 9zM1462 56h20l-10 9z"/><g font-family="DejaVu Sans" font-size="32"><text x="1188" y="66" textLength="104" lengthAdjust="spacingAndGlyphs">persp1</text><text x="1345" y="66" textLength="114" lengthAdjust="spacingAndGlyphs">no cam</text></g></g></svg>`});
def('tool-col',`:host{display:flex;flex-direction:column;align-items:center;flex:none;width:27px;height:482px;background:#d2d2d2;border-left:1px solid #000;padding:1px 1px 0 1px}
.h{align-self:stretch;height:6px;background:#f5f5f5;border:1px solid #999;margin-bottom:6px;flex:none}.c{display:grid;place-items:center;flex:none;width:22px;height:23px}.w{background:#f6f6f6;border:1px solid #ccc;border-top-color:#888;height:22px}.d{background:#8b8b8b;border:1px solid #555;height:23px}hr{align-self:stretch;border:0;border-top:1px solid #888;margin:4px 0 5px;flex:none}.sp{flex:1}`,
()=>`<div class="h"></div><div class="c w">${I('cone',17)}</div><div class="c w">${I('dia',17)}</div><div class="c d">${I('ycube',17)}</div><hr style="margin-bottom:6px">
${['cur','redm','rot','scl','axis'].map(n=>`<div class="c">${I(n,16)}</div>`).join('')}<hr style="margin-top:3px">${['maggr','magcv','magpt','mag'].map(n=>`<div class="c">${I(n,17)}</div>`).join('')}<hr style="margin-top:3px;margin-bottom:4px"><div class="c d">${I('cam',16)}</div><div class="c">${I('obr',16)}</div><div class="c">${I('lens',16)}</div><div class="sp"></div><div class="c">${I('snap',16)}</div><div class="c" style="margin-bottom:2px">${I('lens2',16)}</div>`);
def('tool-sliver',`:host{display:block;flex:none;width:25px;height:482px;background:#d6d6d6}svg{display:block}`,()=>`<svg width="10" height="482"><path d="M0 2h10v5H0z" fill="#fff"/><path d="M1 117h9v22H1zM1 187h9v22H1z" fill="#888" stroke="#666"/><path d="M9 36l-4 3 4 3M9 55h-2v12M9 100q-4 6 0 14M9 155l-2 4M9 190q-4 5 0 12" fill="none" stroke="#888" stroke-width="1.300"/>${[270,318].map(y=>`<circle cx="9" cy="${y}" r="2.500" fill="#fff" stroke="#444"/>`).join('')}<path d="M9 342l-2 4h3M9 364l-2 4h3M10 382H7v12h3M10 404H7v12h3M10 432H6v2h4M10 452H7v10h3M0 232h10" fill="none" stroke="#777" stroke-width="1.200"/></svg>`);

/* ---------- tree ---------- */
def('tree-view',`:host{display:flex;flex-direction:column;width:275px;flex:none}
.l{height:219px;overflow:hidden;background:repeating-linear-gradient(#fff 0 18px,#ebebeb 18px 36px);padding-top:1px;color:#3a3a3a;border-left:2px solid #888;border-right:1px solid #999}
.r{display:flex;align-items:center;height:18px}svg{display:block;flex:none}
.f{display:flex;align-items:center;height:21px;background:#d2d2d2;color:#333;padding-left:3px}`,()=>{
 const pm=(p,m=1)=>`<svg width="14" height="18" style="margin-right:${m}px"><path d="M4.500 0v18M9 9h5" stroke="#666"/><rect x=".5" y="5" width="8" height="8" fill="#fff" stroke="#333"/><path d="M2 9h5${p?'M4.500 6.500v5':''}" stroke="#222" fill="none"/></svg>`;
 const R=(n,w,ic)=>`<div class="r" style="padding-left:22px">${pm(1,ic?1:4)}${ic?I(ic,17,17,'margin-right:4px'):''}${T(n,w)}</div>`;
 return `<div class="l"><div class="r" style="padding-left:4px;">${pm(0,4)}${T('/obj/PARTICLES_SIM',103)}</div>
 <div class="r" style="padding-left:26px"><svg width="14" height="18"><path d="M.5 0v18M0 9.500h9" stroke="#666"/></svg>${T('Affector Matrix',78)}</div>${R('Relationships',71)}${R('DEBRIS_PARTICLES',100,'ch')}${R('FINITE_PARTICLES',94,'shirt')}${R('GROUND_OBJECT',92,'bowl')}</div>
 <div class="f">${T('Filter',26)}<h-field style="width:226px;height:19px;margin-left:4px"></h-field><h-drop style="width:16px;height:19px"></h-drop></div>`});
def('sheet-view',`:host{display:grid;grid-template:221px 14px 1fr/250px 14px;padding:2px 0 0 3px;background:#d0d0d0;flex:none}
.a{background:linear-gradient(#fff 0 16px,transparent 0),repeating-linear-gradient(#fff 0 18px,#ebebeb 18px 36px) 0 -2px}.v{display:flex;flex-direction:column}.h{display:flex}
.t{background:#b9b9b9;border:2px solid #a0a0a0;display:grid;place-items:center}.b{background:#dadada;border:1px solid #c4c4c4;display:grid;place-items:center;width:17px}`,()=>{
 const dots=(w,h)=>`<svg width="${w*3}" height="${h*3}">${[...Array(w*h)].map((_,i)=>`<rect x="${i%w*3}" y="${(i/w|0)*3}" width="2" height="2" fill="#222"/>`).join('')}</svg>`;
 const ar=d=>`<svg width="6" height="6"><path d="${d}" fill="#aaa" stroke="#888" stroke-width=".6"/></svg>`;
 return `<div class="a"></div><div class="v"><div class="t" style="height:185px">${dots(3,4)}</div><div class="b" style="width:14px;height:18px">${ar('M0 6h6L3 0z')}</div><div class="b" style="width:14px;height:18px">${ar('M0 0h6L3 6z')}</div></div><div class="h"><div class="t" style="width:214px">${dots(4,3)}</div><div class="b">${ar('M6 0v6L0 3z')}</div><div class="b">${ar('M0 0v6L6 3z')}</div></div><div></div>`});

/* ---------- network ---------- */
def('note-card',`:host{position:absolute;display:block;background:#fff583;border:1px solid #a39a48;color:#111;overflow:hidden}
.h{height:11px;background:#e5db60;display:flex;justify-content:flex-end;gap:4px;align-items:center;padding-right:1px}.l{height:14px;display:flex;align-items:center;padding-top:1px}.g{position:absolute;right:1px;bottom:1px}svg{display:block}`,
e=>{const L=JSON.parse(A(e,'d'));return (e.hasAttribute('bar')?`<div class="h"><svg width="8" height="8"><path d="M0 1h8M4 8V2" stroke="#111" stroke-width="1.600"/><path d="M1 5l3-3 3 3z"/></svg><svg width="9" height="8"><path d="M.5 .5h8v7h-8zM1 1l7 6M8 1L1 7" fill="none" stroke="#999045"/></svg></div>`:'')+`<div style="padding-top:${A(e,'pt')}px">`+L.map(([t,w])=>`<div class="l" style="padding-left:${A(e,'pl','3')}px">${t?T(t,w,'f="c" s="12"'):''}</div>`).join('')+`</div><svg class="g" width="7" height="7"><g fill="#998f40"><path d="M5 0h1v1H5zM5 2h1v1H5zM3 2h1v1H3zM5 4h1v1H5zM3 4h1v1H3zM1 4h1v1H1zM5 6h1v1H5zM3 6h1v1H3zM1 6h1v1H1z"/></g></svg>`});
def('net-graph',`:host{display:block;position:relative;width:1122px;height:770px;background:#a6a6a6;overflow:hidden}svg{display:block}text{font-family:"DejaVu Sans",sans-serif}
.pal{position:absolute;left:0;bottom:0;width:105px;height:106px;background:#ccc;border:1px solid #fff;border-top:2px solid #888;border-left:0;display:grid;grid-template-columns:repeat(6,15px);grid-auto-rows:15px;gap:2px;padding:1px 2px}`,()=>{
 const conn=(x,y,c,d=0)=>`<rect x="${x}" y="${y}" width="17" height="5" fill="${c?'#86c98a':'#b3aeb1'}" stroke="#555" stroke-width=".8"/><path d="M${x} ${y+.5}h17" stroke="${c?'#c7f0c7':'#eee'}"/><path d="M${x-.5} ${y}v5.500M${x+17.500} ${y}v5.500${d?`M${x-.5} ${y+5}h18`:''}" stroke="#111"/>`;
 const node=(x,y,ic,o={})=>`${(o.ins||[]).map(([dx,c])=>conn(x+dx,y-5,c)).join('')}${conn(x+31,y+22,o.og,1)}<rect x="${x}" y="${y}" width="80" height="22" fill="url(#n)" stroke="#333" stroke-width="1"/><path d="M${x} ${y+22}h80" stroke="#000" stroke-width="1.600"/><rect x="${x+1}" y="${y+1}" width="9" height="20" fill="#eee" stroke="#e3e38a"/><rect x="${x+11}" y="${y+1}" width="9" height="20" fill="#ddd" stroke="#999"/><rect x="${x+70}" y="${y+1}" width="9" height="20" fill="${o.out?'#c46a05':'#ddd'}" stroke="${o.out?'#733':'#d5a982'}"/><svg x="${x+38}" y="${y+4}" width="13" height="13" viewBox="0 0 16 16">${IC[ic]}</svg>`;
 const cols='b00000 d60000 f20000 ffa8a8 ffcaca ffe6e6 cfa67c e5cb00 ffe600 ffffa6 ffffcc ffffe6 008a00 00a800 00c200 a8ffa8 caffca e6ffe6 0079c8 007bff 00a4ff 00c8ff 00e6ff a6ffff 7900a6 a600c8 a679c8 c8a6ff c8c8ff e6e6ff 000000 a0a0a0 bcbcbc d8d8d8 e6e6e6 ffffff'.split(' ');
 return `<svg width="1122" height="770" viewBox="557 172 1122 770"><linearGradient id="n" x2="0" y2="1"><stop offset="0" stop-color="#e2e2e2"/><stop offset=".3" stop-color="#f3f3f3"/><stop offset="1" stop-color="#c4c4c4"/></linearGradient>
 <g fill="none" stroke="#777"><path d="M785.500 657q1 18-6 30-15 26-18 35-4 12-4.500 16"/><path d="M785 770L757 808"/></g>
 <path d="M947 697q-10 11-36 16-25 4-65 7-42 3-50 18" fill="none" stroke="#0a4c12" stroke-width="1.300"/><path d="M880 716.500l11-4.500v8z" fill="#064408"/>
 <circle cx="790" cy="903" r="30" fill="none" stroke="#c46a05" stroke-width="9" transform="matrix(1 0 0 1.050 0 -45)"/>
 <path d="M787 840l1 20 1.500 27" fill="none" stroke="#777"/>
 ${node(746,631,'sim')}${node(907.500,670,'geon',{ins:[[1,0],[41,1]],og:1})}${node(746,743,'ffield',{ins:[[2,0],[42,1]]})}${node(746,813,'apple',{ins:[[2,0],[42,1]]})}${node(750,892,'flag',{ins:[[31,0]],out:1})}
 <path d="M906.500 664h21.500v5h18.500v-5h21v5h21v25h-31v4.500h-20v-4.500h-31.500v-25h1z" fill="none" stroke="#f5d327" stroke-width="2.200"/>
 <g font-size="12.500" fill="#1c1c1c"><path d="M872 648h6" stroke="#111"/><text x="990" y="678" textLength="112" lengthAdjust="spacingAndGlyphs">IMPORT_PARTICLES</text><text x="990" y="692" textLength="68" lengthAdjust="spacingAndGlyphs" fill="#444">(Geometry)</text><text x="829" y="758" textLength="107" lengthAdjust="spacingAndGlyphs">PARTICLES_FORCE</text><text x="829" y="828" textLength="95" lengthAdjust="spacingAndGlyphs">GRAVITY_FORCE</text><text x="833" y="907" textLength="39" lengthAdjust="spacingAndGlyphs" fill="#262388">output</text></g></svg>
 <note-card style="left:-2px;top:468px;width:52px;height:103px" pt="26" pl="2" d='[["se the",34]]'></note-card>
 <note-card bar style="left:573px;top:484px;width:348px;height:246px" pt="4" d='[["Since the filed force I want to compute it&#39;s based on particles",334],["and using key-frame animation. I am interested in capture the",340],[" movements of the particles so I can advect the objects with",329],["the velocity or the particles in space.",200],["",0],["- Set Always in SOP and Time is important so both",273],["parameters can be evaluated per frame.",222],["",0],["- It&#39;s important to note I have used the velocity (v) field",298],["instead default force.",117],["",0],["- I use set the \\"Max Distance\\" as I wanted. In the simulation it",336],["can be seen there are particles that are going to be affected",330],["with the advaction and some other not. This behaviour I",305],["consider more realistic and Bayesian (based on probability)",326],["way.",24]]'></note-card>
 <div class="pal">${cols.map(c=>`<i style="background:#${c}"></i>`).join('')}</div>`});

/* ---------- parameter windows ---------- */
const winCSS=`:host{position:absolute;display:flex;flex-direction:column;background:#d2d2d2;overflow:hidden;color:#333}
.hd{display:flex;align-items:center;flex:none;color:#333}.hd .r{margin-left:auto;display:flex;gap:8px}
.tabs{display:flex;margin:2px 0 0 4px;height:18px;flex:none}.tabs div{display:grid;place-items:center;border:1px solid #888;border-bottom:0;background:linear-gradient(#fff,#d2d2d2);padding-top:2px}.tabs .o{background:linear-gradient(#ccc,#a5a5a5)}
.bd{border-left:2px solid #f8f8f8;border-top:2px solid #fff;border-bottom:1px solid #888;margin-left:4px;flex:none}
.tb{border-top:1px solid #888;border-left:1px solid #888;background:#fff;flex:none;display:flex}.m{flex:1}
.th{display:flex;height:15px}.th div{background:linear-gradient(#eee,#c8c8c8);border-right:1px solid #777;border-bottom:1px solid #777;margin:0 2px 0 0;display:flex;align-items:center;flex:none}
.tr{display:flex;height:15px;align-items:center}.tr i,.tr b{display:grid;place-items:center;width:17px;height:15px;background:#d0d0d0;border:1px solid #888;border-bottom-color:#222;flex:none}.tr b{margin-left:auto;width:14px}svg{display:block}`;
const up='<svg width="9" height="10"><path d="M4.500 0L9 5H0z"/><path d="M4.500 4v6" stroke="#000" stroke-width="2"/></svg>',cx='<svg width="8" height="8"><rect width="8" height="8" fill="#999"/><path d="M1.500 1.500l5 5M6.500 1.500l-5 5" stroke="#fff"/></svg>';
const row=(sel,lw,l,tw,c,x='',st='')=>`<p-row lw="${lw}" l="${l}" tw="${tw||''}" ${x} style="${st}">${sel}${c}</p-row>`;
const ud=(t='Use Default',w=62,x='',st='')=>`<h-select slot="s" t="${t}" tw="${w}" ${x} style="width:108px;${st}"></h-select>`;
def('force-window',winCSS,()=>`<div class="hd" style="height:24px;margin-left:4px;border-bottom:1px solid #777;padding:2px 0 0 3px">${I('field',16)}<span style="width:4px"></span>${T('Field Force',64,'b')}<span style="width:4px"></span>${FLD('PARTICLES_FORCE',400)}<div class="r" style="padding-right:8px">${I('geard',15)}${I('hd',15)}${I('info',13)}</div></div>
<div class="tabs"><div style="width:85px">${T('Data Options',69)}</div><div class="o" style="width:92px">${T('Guide Options',75)}</div></div>
<div class="bd" style="height:192px;padding:2px 0 0 4px">
${row(ud(),123,'Force Attribute',79,FLD('v',330,19,'b'))}
${row(ud(),123,'Scale Force',60,FLD('3',72,22,'b')+'<h-slider w="240" full style="margin-left:4px"></h-slider>')}
${row(ud(),123,'Torque Attribute',85,FLD('torque',330))}
${row(ud(),123,'Scale Torque',67,FLD('3',72,22,'b')+'<h-slider w="240" full style="margin-left:4px"></h-slider>')}
${row(ud(),123,'','',CHK('Use Max Distance',95,'on'))}
${row(ud(),123,'Max Distance',71,FLD('5',72,22,'b')+'<h-slider w="240" full style="margin-left:4px"></h-slider>')}
${row(ud(),123,'','',CHK('Treat As Wind',72))}
${row(ud(),123,'Sampling Mode',82,SEL('Sphere',75,38,'b'))}</div>
<div style="flex:none;height:131px">
${row('',126,'Default Operation',95,SEL('Set Initial',95,50))}
${row('',126,'Data Sharing',69,SEL('Share Data In One Timestep',187,150))}
${row('',126,'Activation',53,FLD('$FF&lt;120',196,22,'g b')+'<h-slider w="217" p="19" k="10" style="margin:0 4px"></h-slider><h-drop></h-drop>')}
${row('',126,'Group',32,FLD('*',420)+'<h-drop style="margin-left:1px"></h-drop>')}
${row('',126,'Data Name',60,FLD('Forces/Field',440),'','height:20px')}
${row('',126,'','',CHK('Unique Data Name',100,'on'),'','height:18px')}</div>
<div class="tb" style="margin-left:4px;height:105px"><div class="m"><div class="th"><div style="width:16px"></div><div style="width:528px;padding-left:2px">${T('Input Operators (Drag/Drop to reorder)',207)}</div><div style="width:15px;margin:0"></div></div>
<div class="tr"><i>${up}</i>${T('MERGE_SOLVERS',91,'style="margin-left:3px"')}<b>${cx}</b></div><div class="tr" style="background:#ebebeb"><i>${up}</i>${T('IMPORT_PARTICLES',101,'style="margin-left:3px"')}<b>${cx}</b></div></div></div>`);
def('geo-window',winCSS,()=>`<div class="hd" style="height:25px;margin-left:3px;border-top:2px solid #444;border-bottom:1px solid #777;padding:1px 0 0 6px">${I('geom',16)}<span style="width:1px"></span>${T('SOP Geometry',86,'b')}<span style="width:3px"></span>${FLD('IMPORT_PARTICLES',379)}<div class="r" style="padding-right:5px">${I('geard',15)}${I('hd',15)}${I('info',13)}${I('help',13)}</div></div>
<div style="padding:2px 0 0 4px;height:216px;flex:none">
${row(ud(),123,'','',CHK('Use External SOP',92,'on'))}
${row(ud('Set Always',59,'b'),123,'SOP Path',48,FLD('/obj/PARTICLES/OUT',288,19,'b')+I('jump',15,14,'margin-left:4px')+I('pick',15,15,'margin-left:6px'))}
${row(ud(),123,'Primitive Group',82,FLD('',333,19))}
${row(ud('Set Always',59,'b'),123,'Time',26,FLD('0',72,22,'g')+'<h-slider w="255" p="0" style="margin-left:2px"></h-slider>')}
${row(ud(),123,'','',CHK('Use Object Transform',114))}
${row(ud('Use Default',62,'dis'),123,'Transform Time',82,FLD('0',72,22,'dis')+'<h-slider dis w="255" p="0" style="margin-left:2px"></h-slider>','dis')}
${row(ud(),123,'','',CHK('Re-evaluate SOPs to Interpolate Geometry',225))}
${row(ud(),123,'Position Data Path',96,FLD('../Position',333))}
${row(ud('Use Default',62,'','margin-top:4px'),123,'Number of Stamps',99,FLD('0',106,20)+`<h-btn style="width:17px">${I('plusd',10)}</h-btn><h-btn style="width:17px"><svg width="10" height="6"><path d="M1 1h8v3H1z" fill="#ddd" stroke="#999"/></svg></h-btn><h-btn style="width:61px;margin-left:2px;background:#b9b9b9;color:#888">${T('Clear',28)}</h-btn>`)}</div>
<div style="flex:none;height:131px">
${row('',125,'Default Operation',95,SEL('Set Initial',94,50))}
${row('',125,'Data Sharing',69,SEL('Do Not Share Data',187,99))}
${row('',125,'Activation',53,FLD('1',81,22,'g')+'<h-slider w="332" p="30" k="10" style="margin:0 4px"></h-slider><h-drop></h-drop>')}
${row('',125,'Group',32,FLD('*',420)+'<h-drop style="margin-left:1px"></h-drop>')}
${row('',125,'Data Name',60,FLD('Geometry',442),'','height:20px')}
${row('',125,'','',CHK('Unique Data Name',100),'','height:18px')}</div>
<div class="tb" style="margin:0 4px 0 3px;height:105px"><div class="m"><div class="th"><div style="width:16px"></div><div style="width:527px;padding-left:2px">${T('Input Operators (Drag/Drop to reorder)',207)}</div><div style="width:16px;margin:0"></div></div></div><div style="width:15px;background:#d0d0d0;border:1px solid #888;border-top:0"></div></div><div style="flex:1"></div>`);

/* ---------- timeline ---------- */
def('play-bar',`:host{display:flex;height:43px;flex:none;background:linear-gradient(#dedede,#cfcfcf);border-top:1px solid #fff;border-bottom:1px solid #222;color:#333;overflow:hidden}
.hn{width:7px;background:#f0f0f0;border-right:1px solid #333}.g{display:flex;margin:8px 0 0 7px;height:25px;flex:none}.g div{width:24px;display:grid;place-items:center;background:linear-gradient(#fff,#ccc);border:1px solid #888;border-left-color:#fff;border-top-color:#999}.g .s{background:#7c7c7c}.tl{flex:none}svg{display:block;flex:none}
.f{margin-top:12px;flex:none}.f2{display:flex;margin:8px 0 0 8px;height:23px}.f2 div{width:21px;height:23px;display:grid;place-items:center;background:linear-gradient(#fff,#d0d0d0);border:1px solid #999;flex:none}`,()=>{
 const p=(d,g='')=>`<div><svg width="17" height="13" viewBox="0 0 17 13">${g}<path d="${d}" fill="#f4f4f4" stroke="#666" stroke-width="1"/></svg></div>`;
 let t='';for(let f=6;f<=249;f+=6){const x=.300+(f-1)*4.836,M=f%24==0;t+=`<path d="M${x.toFixed(1)} ${M?12:13}v${M?9:6}" stroke="${M?'#444':'#999'}" stroke-width="${M?1.300:1}"/>`;if(M)t+=`<text x="${(x+.8).toFixed(1)}" y="11" textLength="${f<100?11.500:17.500}" lengthAdjust="spacingAndGlyphs">${f}</text>`}
 const br='<rect x="3" y="1" width="4" height="11" fill="#8ed14c" stroke="#363"/>';
 return `<div class="hn"></div><div class="g">${p('M1 1v11M3 1v11M9 1v11L4 6.500zM15 1v11l-5-5.500z')}${p('M14 1v11L8 6.500z',br)}${p('M13 1v11L4 6.500z')}<div class="s"><svg width="11" height="12"><rect width="11" height="12" fill="#f6f6f6"/></svg></div>${p('M4 1v11l9-5.500z')}${p('M3 1v11l6-5.500z','<rect x="10" y="1" width="4" height="11" fill="#8ed14c" stroke="#363"/>')}</div>
 <h-field v="1" class="f" style="width:51px;margin-left:7px"></h-field><h-btn class="f" style="width:17px;height:19px"><svg width="9" height="5"><path d="M.5 .5h8v3h-8z" fill="#aaa" stroke="#777"/></svg></h-btn><h-btn class="f" style="width:17px;height:19px">${I('plus',9)}</h-btn>
 <h-field v="1" class="f" style="width:43px;margin-left:7px;background:#e6e6e6"></h-field>
 <svg class="tl" style="margin-left:2px" width="1211" height="42"><path d="M20 16.500h1189" stroke="#aaa"/><g font-family="DejaVu Sans" font-size="10" fill="#555">${t}</g><rect x="1" y="1.500" width="18.500" height="17" fill="#111"/><text x="7" y="14.500" font-family="DejaVu Sans" font-size="13" fill="#fff" textLength="7" lengthAdjust="spacingAndGlyphs">1</text><path d="M1.500 18v14" stroke="#333" stroke-width="2"/><path d="M1 19h5" stroke="#369"/><rect x=".5" y="32.500" width="1209" height="7.500" fill="#ececec" stroke="#888"/><path d="M20 33v7M1190 33v7M1209.500 2v38" stroke="#999"/><g fill="#333"><path d="M8 36h2v1.500H8zM11.500 36h2v1.500h-2zM15 36h2v1.500h-2zM1197 36h2v1.500h-2zM1200.500 36h2v1.500h-2zM1204 36h2v1.500h-2zM601 36h2v1.500h-2zM604.500 36h2v1.500h-2zM608 36h2v1.500h-2zM611 36h2v1.500h-2z"/></g></svg>
 <h-field v="250" class="f" style="width:43px;margin-left:1px;background:#e6e6e6"></h-field><div class="f2"><div>${I('key',15)}</div></div><div class="f2" style="margin-left:4px"><div>${I('clock',13)}</div><div>${I('proto',15)}</div><div>${I('snd',14)}</div><div>${I('win',14)}</div></div>`});

/* ---------- application ---------- */
def('houdini-app',`:host{position:relative;display:flex;flex-direction:column;width:1680px;height:1018px;overflow:hidden;background:#d0d0d0;color:#333}
.title{display:flex;align-items:center;height:22px;background:linear-gradient(#93aecd,#bcd0e8);border-top:1px solid #333a44;border-bottom:1px solid #8aa;padding-left:2px;color:#111;flex:none}
.wb{margin-left:auto;display:flex;gap:2px;padding:1px 2px 0 0;align-self:flex-start}.wb div{width:31px;height:17px;display:grid;place-items:center;border:1px solid #44597a;border-radius:2px;background:linear-gradient(#cfe0f2,#8fabcb);box-shadow:inset 0 0 0 1px #dfeaf6}.wb .x{background:linear-gradient(#e09a8c,#c0402a);border-color:#5a1818;box-shadow:inset 0 0 0 1px #eab0a5}
.menu{display:flex;height:26px;flex:none;background:linear-gradient(#fff,#d8d8d8);border-bottom:1.500px solid #222;align-items:center;color:#333}.menu t-x{margin-top:2px}
.hn{width:8px;align-self:stretch;background:linear-gradient(90deg,#fff,#e5e5e5);border-right:1px solid #222;margin-right:1px;flex:none}.hn svg{margin:2px 1px}
.shelf{display:flex;height:49px;flex:none}.main{display:flex;height:845px;flex:none}
.left{width:557px;flex:none;display:flex;flex-direction:column;background:#c8c8c8}.up,.lo{border:1px solid #000;display:flex;flex-direction:column}.up{width:547px;border-left:0;border-bottom:0}.lo{width:551px;border-left:0;border-bottom:0;height:283px}
.row{display:flex}.right{width:1123px;display:flex;flex-direction:column;background:#d2d2d2}
.tb{display:flex;align-items:center;height:26px;background:linear-gradient(#eee 2px,#dedede 3px,#d4d4d4);flex:none}
.st{display:flex;height:24px;flex:none;align-items:center;background:#d0d0d0;justify-content:flex-end}.task{display:flex;height:9px;flex:none;background:#8297af;border-top:2px solid #111}.task div{border:1px solid #5a6c84;border-bottom:0;border-radius:2px 2px 0 0;background:#b9c5d2;overflow:hidden;display:flex;flex:none}svg{display:block}`,
()=>{const hn='<div class="hn"><svg width="5" height="4"><path d="M0 4h5L2.500 0z" fill="#888"/></svg></div>',sp=(w)=>`<span style="width:${w}px;flex:none"></span>`;
return `<div class="title">${I('logo',16)}${sp(9)}${T('C:/Users/test/Documents/houdini15.5/Projects/SideFX-HOUDINI/Samples/debris_particles_sim.hip - Houdini FX 15.5.480',635,'f="o" s="12"')}<div class="wb"><div><svg width="12" height="5"><rect x=".5" y=".5" width="11" height="4" rx="1" fill="#fff" stroke="#445"/></svg></div><div><svg width="13" height="11"><path d="M4.500 .500h8v6h-8z" fill="#fff" stroke="#445"/><path d="M.5 4h8v6.500h-8z" fill="#fff" stroke="#445"/><path d="M3 6.500h3v1.500H3z" fill="#89a" stroke="#445" stroke-width=".6"/></svg></div><div class="x"><svg width="12" height="10"><path d="M2 1l8 8M10 1L2 9" stroke="#533" stroke-width="4"/><path d="M2 1l8 8M10 1L2 9" stroke="#fff" stroke-width="2.500"/></svg></div></div></div>
<div class="menu">${hn}${sp(5)}${[['File',19.500],['Edit',22.500],['Render',42],['Windows',52],['Assets',38],['Help',27]].map(([t,w])=>T(t,w,'s="12.5" style="margin-right:9.7px"')).join('')}<div style="margin:2px 0 0 auto">${CHK('Auto Takes',57,'','s="12"')}</div>${sp(10)}${SEL('Main',131,25,'flat s="12"',25)}${sp(8)}${I('help',13)}${sp(8)}</div>
<div class="shelf">${hn}<shelf-set d="l" style="width:668px"></shelf-set><div style="width:7px;background:#eee;border-right:2px solid #222;border-left:1px solid #777"><svg width="5" height="34" style="margin-top:15px">${[...Array(7)].map((_,i)=>`<path d="M0 ${3+i*2.500}h1.200M2.500 ${3+i*2.500}h1.200" stroke="#222"/>`).join('')}</svg></div><shelf-set d="r" style="flex:1"></shelf-set></div>
<div class="main"><div class="left"><div class="up"><pane-tabs d='[["Scene View",85,47],["Render View",91,52]]'></pane-tabs>
<path-bar w="370">${I('pin',15,14,'margin-left:9px')}${I('target',15,15,'margin-left:7px')}${I('cubed',17,17,'margin-left:13px')}${I('sphd',17,17,'margin-left:6px')}${I('sqd',16,16,'margin-left:5px')}</path-bar>
<div style="display:flex;align-items:center;height:32px;background:linear-gradient(#ececec,#d2d2d2)">${hn}${sp(4)}${I('camd',17,17)}${sp(3)}${T('View',28,'b s="12"')}<span style="flex:1"></span>${I('net',17,17)}${sp(8)}${I('help',12)}${sp(7)}</div></div>
<div class="row"><tool-col></tool-col><scene-view></scene-view><tool-sliver></tool-sliver></div>
<h-split style="height:5px;border-top:1px solid #888"></h-split>
<div class="lo"><pane-tabs d='[["Geometry Spreadsheet",133,96],["Render View",91,52]]'></pane-tabs><path-bar w="448">${I('pin',15,14,'margin-left:9px')}${I('target',15,15,'margin-left:7px')}</path-bar>
<div class="row"><tree-view></tree-view><div style="width:5px;background:#ccc;border-right:2px solid #222;display:grid;align-items:center"><svg width="4" height="14"><path d="M1 0v14M3 0v14" stroke="#222" stroke-dasharray="1.500 1.500"/></svg></div><sheet-view></sheet-view></div></div></div>
<div class="right"><h-split style="height:6px;border-bottom:1px solid #000"></h-split><pane-tabs it style="border-left:1px solid #000" d='[["/obj/PARTICLES_SIM",117,82],["Render Scheduler",113,74],["Tree View",78,39],["Material Palette",103,65],["Asset Browser",97,60]]'></pane-tabs>
<path-bar w="989">${I('pin',14,14,'margin-left:9px')}${I('target',15,15,'margin-left:7px')}${I('geard',17,17,'margin-left:15px')}</path-bar>
<div class="tb">${hn}${sp(5)}${I('treei',13)}${sp(9)}${I('list',13)}${sp(8)}${I('pane',14)}${sp(4)}<div style="width:22px;height:22px;background:#888;border:2px solid #555;display:grid;place-items:center">${I('palic',15)}</div>${sp(13)}${I('boxn',14)}${sp(8)}${I('note',14)}${sp(8)}${I('subnet',15)}<span style="flex:1"></span>${['v1','v2','v3','v4','v5','v6'].map(n=>I(n,14,14,'margin-right:8px')).join('')}${sp(9)}${I('zoom',14)}${sp(8)}${I('eye',15)}${sp(8)}</div>
<net-graph style="border-top:1px solid #222;height:771px"></net-graph></div></div>
<play-bar></play-bar>
<div class="st">${I('brain',17)}${sp(3)}${SEL('/obj/PARTICLES_...',125,94)}${sp(5)}${I('refr',15)}${sp(3)}${SEL('Auto Update',110,67,'flat',22)}</div>
<div class="task"><div style="width:60px;background:#7d93ac;justify-content:center"><svg width="34" height="8"><ellipse cx="17" cy="14" rx="16" ry="13" fill="#9fc3dd" stroke="#345"/></svg></div><div style="width:158px"><svg width="40" height="8"><path d="M10 3h12l3 2v3H12z" fill="#f0e2a0"/></svg></div><div style="width:128px;background:#8fa3ba"><svg width="60" height="8"><circle cx="32" cy="11" r="10" fill="#3fb0e0"/></svg></div><div style="width:161px"><svg width="40" height="8"><circle cx="24" cy="8" r="5" fill="#f47a7a"/></svg></div><div style="width:160px;background:#e8ecf0"><svg width="45" height="8"><rect x="9" y="2" width="33" height="6" fill="#ee6b2d"/></svg></div><div style="width:163px"><svg width="50" height="8"><path d="M10 2h20v6H10z" fill="#eee" stroke="#999"/></svg></div><div style="width:160px"><svg width="50" height="8"><circle cx="36" cy="7" r="4" fill="#d9a05a"/></svg></div></div>
<force-window style="left:531px;top:171px;width:565px;height:475px"></force-window><geo-window style="left:1096px;top:172px;width:582px;height:482px;border-bottom:1px solid #777"></geo-window>`});
</script></body></html>
